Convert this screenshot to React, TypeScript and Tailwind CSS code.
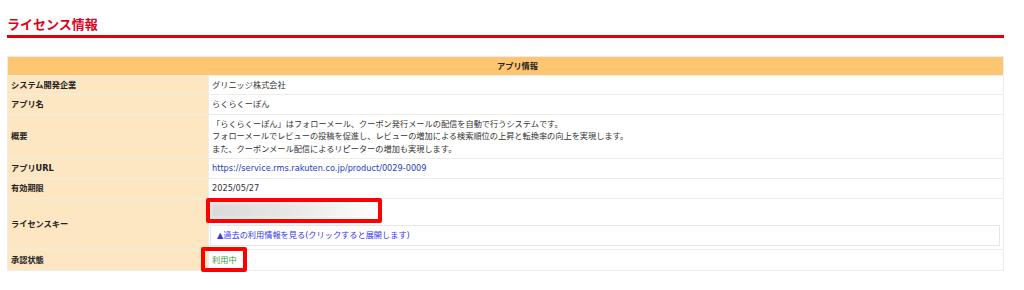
import React from 'react';

const font = { fontFamily: '"DejaVu Sans", "Noto Sans CJK JP", sans-serif' };

type Row = { label: string; h: string; value: React.ReactNode };

const Label = ({ children, h }: { children: React.ReactNode; h: string }) => (
    <div className={`w-[200px] shrink-0 flex items-center pl-[3px] bg-[#fde6c2] font-bold text-[#222] ${h}`}>{children}</div>
);

export default function App() {
    const rows: Row[] = [
        { label: 'システム開発企業', h: 'h-[18px]', value: <span>グリニッジ株式会社</span> },
        { label: 'アプリ名', h: 'h-[19px]', value: <span>らくらくーぽん</span> },
        {
            label: '概要',
            h: 'h-[43px]',
            value: (
                <div className="leading-[12.5px]">
                    <div>「らくらくーぽん」はフォローメール、クーポン発行メールの配信を自動で行うシステムです。</div>
                    <div>フォローメールでレビューの投稿を促進し、レビューの増加による検索順位の上昇と転換率の向上を実現します。</div>
                    <div>また、クーポンメール配信によるリピーターの増加も実現します。</div>
                </div>
            ),
        },
        { label: 'アプリURL', h: 'h-[19px]', value: <span className="text-[#2440c8]">https://service.rms.rakuten.co.jp/product/0029-0009</span> },
        { label: '有効期限', h: 'h-[19px]', value: <span>2025/05/27</span> },
    ];

    return (
        <div className="w-[1024px] h-[290px] bg-white pl-[7px] pr-[20px] pt-[16px] text-[8.2px] text-[#333]" style={font}>
            {/* Title */}
            <div className="h-[18px] text-[13px] font-bold text-[#e0001a] leading-[18px]">ライセンス情報</div>
            <div className="mt-[1px] h-[3px] bg-[#e00012]" />

            {/* Table */}
            <div className="mt-[18px] border border-[#ececec]">
                <div className="h-[18px] bg-[#fec671] flex items-center justify-center font-bold text-[#222] pl-[24px]">アプリ情報</div>

                {rows.map((r) => (
                    <div key={r.label} className="flex border-t border-[#f1ece4]">
                        <Label h={r.h}>{r.label}</Label>
                        <div className="flex-1 flex items-center pl-[3px] bg-white border-l border-[#ececec]">{r.value}</div>
                    </div>
                ))}

                {/* License key */}
                <div className="flex border-t border-[#f1ece4]">
                    <Label h="h-[50px]">ライセンスキー</Label>
                    <div className="flex-1 bg-white border-l border-[#ececec] flex flex-col pl-[1px] pr-[3px]">
                        <div className="relative h-[26px]">
                            <div className="absolute left-[-4px] top-[-1px] w-[176px] h-[25px] border-[4px] border-[#f00] rounded-[2px] overflow-hidden">
                                <div className="h-full w-full bg-gradient-to-r from-[#d9d9d9] via-[#e8e8e8] to-white blur-[2px]" />
                            </div>
                        </div>
                        <div className="h-[21px] border border-[#e6e6e6] flex items-center pl-[6px] text-[#3434f4]">
                            ▲過去の利用情報を見る(クリックすると展開します)
                        </div>
                    </div>
                </div>

                {/* Status */}
                <div className="flex border-t border-[#f1ece4]">
                    <Label h="h-[20px]">承認状態</Label>
                    <div className="flex-1 bg-white border-l border-[#ececec] flex items-center pl-[3px] relative">
                        <span className="text-[#3c9a3c]">利用中</span>
                        <div className="absolute left-[-8px] top-[-3px] w-[46px] h-[25px] border-[4px] border-[#f00] rounded-[2px]" />
                    </div>
                </div>
            </div>
        </div>
    );
}
